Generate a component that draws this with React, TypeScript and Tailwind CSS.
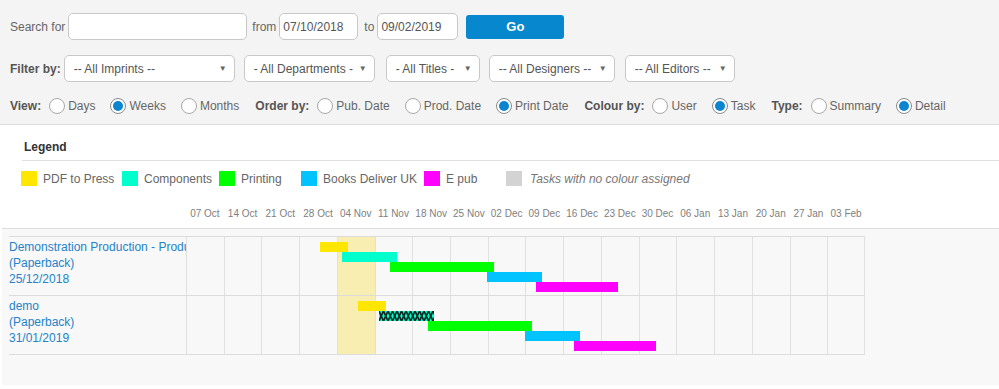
import React from 'react';

type Bar = { left: number; width: number; color: string; hatched?: boolean };

const WEEKS = ['07 Oct', '14 Oct', '21 Oct', '28 Oct', '04 Nov', '11 Nov', '18 Nov', '25 Nov', '02 Dec', '09 Dec', '16 Dec', '23 Dec', '30 Dec', '06 Jan', '13 Jan', '20 Jan', '27 Jan', '03 Feb'];

const LEGEND = [
    { label: 'PDF to Press', color: 'bg-[#ffe600]', w: 'w-[101px]' },
    { label: 'Components', color: 'bg-[#00ffcc]', w: 'w-[97px]' },
    { label: 'Printing', color: 'bg-[#00ff00]', w: 'w-[82px]' },
    { label: 'Books Deliver UK', color: 'bg-[#00c3ff]', w: 'w-[123px]' },
    { label: 'E pub', color: 'bg-[#ff00ff]', w: 'w-[82px]' },
];

const ROWS: { title: string; format: string; date: string; bars: Bar[] }[] = [
    {
        title: 'Demonstration Production - Production',
        format: '(Paperback)',
        date: '25/12/2018',
        bars: [
            { left: 134, width: 28, color: 'bg-[#ffe600]' },
            { left: 156, width: 55, color: 'bg-[#00ffcc]' },
            { left: 204, width: 104, color: 'bg-[#00ff00]' },
            { left: 301, width: 55, color: 'bg-[#00c3ff]' },
            { left: 350, width: 82, color: 'bg-[#ff00ff]' },
        ],
    },
    {
        title: 'demo',
        format: '(Paperback)',
        date: '31/01/2019',
        bars: [
            { left: 172, width: 28, color: 'bg-[#ffe600]' },
            { left: 193, width: 55, color: 'bg-[#00ffcc]', hatched: true },
            { left: 242, width: 104, color: 'bg-[#00ff00]' },
            { left: 339, width: 55, color: 'bg-[#00c3ff]' },
            { left: 388, width: 82, color: 'bg-[#ff00ff]' },
        ],
    },
];

const Radio = ({ checked, label, first }: { checked?: boolean; label: string; first?: boolean }) => (
    <div className={`flex items-center ${first ? 'ml-2' : 'ml-[15px]'}`}>
        <span className={`w-4 h-4 rounded-full bg-white border flex items-center justify-center ${checked ? 'border-[#8a8a8a]' : 'border-[#a8a8a8]'}`}>
            {checked && <span className="w-[10px] h-[10px] rounded-full bg-[#0b85cf]" />}
        </span>
        <span className="ml-[3px] text-[#666]">{label}</span>
    </div>
);

const FakeSelect = ({ label, w, ml }: { label: string; w: string; ml: string }) => (
    <div className={`${w} ${ml} h-[27px] bg-white border border-[#c8c8c8] rounded-[5px] flex items-center justify-between pl-[9px] pr-[7px] text-[#555]`}>
        <span>{label}</span>
        <span className="text-[8px] text-[#666]">▼</span>
    </div>
);

// cross-hatch drawn over a bar: two opposite zigzags that meet in X's
const Hatch = ({ width }: { width: number }) => {
    let a = 'M0 0';
    let b = 'M0 10';
    for (let x = 0; x < width; x += 9) {
        a += ` L${x + 4.5} 10 L${x + 9} 0`;
        b += ` L${x + 4.5} 0 L${x + 9} 10`;
    }
    return (
        <svg width={width} height={10} className="block">
            <path d={a} fill="none" stroke="#0b2a24" strokeWidth={1.7} />
            <path d={b} fill="none" stroke="#0b2a24" strokeWidth={1.7} />
        </svg>
    );
};

export default function App() {
    return (
        <div className="w-[999px] h-[389px] bg-white font-['Liberation_Sans',Arial,sans-serif] text-[12px] leading-4 overflow-hidden">
            {/* filters */}
            <div className="h-[125px] bg-[#f4f4f4] border-b border-[#dcdcdc] pl-[10px] pt-[13px]">
                <div className="flex items-center h-[27px] text-[#666]">
                    <span>Search for</span>
                    <div className="ml-[3px] w-[179px] h-[27px] bg-white border border-[#c8c8c8] rounded-[5px]" />
                    <span className="ml-[5px]">from</span>
                    <div className="ml-[3px] w-[79px] h-[27px] bg-white border border-[#c8c8c8] rounded-[5px] flex items-center pl-[3px] text-[#555]">07/10/2018</div>
                    <span className="ml-[6px]">to</span>
                    <div className="ml-[3px] w-[81px] h-[27px] bg-white border border-[#c8c8c8] rounded-[5px] flex items-center pl-[3px] text-[#555]">09/02/2019</div>
                    <button className="ml-2 w-[98px] h-6 bg-[#0787cd] rounded-[3px] text-white font-bold text-[13px]">Go</button>
                </div>
                <div className="flex items-center h-[27px] mt-[15px]">
                    <span className="font-bold text-[#555]">Filter by:</span>
                    <FakeSelect label="-- All Imprints --" w="w-[171px]" ml="ml-[3px]" />
                    <FakeSelect label="- All Departments -" w="w-[131px]" ml="ml-[9px]" />
                    <FakeSelect label="- All Titles -" w="w-[94px]" ml="ml-[11px]" />
                    <FakeSelect label="-- All Designers --" w="w-[126px]" ml="ml-[9px]" />
                    <FakeSelect label="-- All Editors --" w="w-[110px]" ml="ml-[10px]" />
                </div>
                <div className="flex items-center h-4 mt-4">
                    <span className="font-bold text-[#555]">View:</span>
                    <Radio first label="Days" />
                    <Radio checked label="Weeks" />
                    <Radio label="Months" />
                    <span className="ml-4 font-bold text-[#555]">Order by:</span>
                    <Radio first label="Pub. Date" />
                    <Radio label="Prod. Date" />
                    <Radio checked label="Print Date" />
                    <span className="ml-4 font-bold text-[#555]">Colour by:</span>
                    <Radio first label="User" />
                    <Radio checked label="Task" />
                    <span className="ml-4 font-bold text-[#555]">Type:</span>
                    <Radio first label="Summary" />
                    <Radio checked label="Detail" />
                </div>
            </div>

            {/* legend */}
            <div className="ml-[22px] border-b border-[#e2e2e2] pt-[14px] pb-[5px] pl-[2px]">
                <span className="font-bold text-[#333]">Legend</span>
            </div>
            <div className="flex items-center ml-[21px] mt-[10px] h-[15px]">
                {LEGEND.map(item => (
                    <div key={item.label} className={`${item.w} flex items-center`}>
                        <span className={`w-4 h-[15px] ${item.color}`} />
                        <span className="ml-[6px] text-[#666]">{item.label}</span>
                    </div>
                ))}
                <div className="flex items-center">
                    <span className="w-4 h-[15px] bg-[#d3d3d3]" />
                    <span className="ml-2 italic text-[#777]">Tasks with no colour assigned</span>
                </div>
            </div>

            {/* week header */}
            <div className="ml-[9px] w-[856px] mt-[20px] grid grid-cols-[177px_repeat(18,minmax(0,1fr))] h-[14px] items-center">
                <span />
                {WEEKS.map(w => (
                    <span key={w} className="text-center text-[10px] text-[#808080] whitespace-nowrap">{w}</span>
                ))}
            </div>

            {/* chart */}
            <div className="ml-[2px] mt-[8px] h-[157px] bg-[#f8f8f8] border-t border-[#dcdcdc] pt-[7px] pl-[7px]">
                <div className="w-[856px] border-t border-[#dcdcdc]">
                    {ROWS.map(row => (
                        <div key={row.date} className="relative grid grid-cols-[177px_repeat(18,minmax(0,1fr))] h-[59px] border-b border-[#dcdcdc]">
                            <div className="overflow-hidden whitespace-nowrap text-[#2383c8] pt-[2px]">
                                <div>{row.title}</div>
                                <div>{row.format}</div>
                                <div>{row.date}</div>
                            </div>
                            {WEEKS.map((w, i) => (
                                <div key={w} className={`border-l border-[#e0e0e0] ${i === 17 ? 'border-r' : ''} ${i === 4 ? 'bg-[#f9eeb2]' : ''}`} />
                            ))}
                            <div className="absolute left-[177px] top-[5px] right-0 bottom-0">
                                {row.bars.map((bar, i) => (
                                    <div
                                        key={bar.left}
                                        className={`absolute h-[10px] ${bar.color}`}
                                        style={{ left: bar.left, width: bar.width, top: i * 10 }}
                                    >
                                        {bar.hatched && <Hatch width={bar.width} />}
                                    </div>
                                ))}
                            </div>
                        </div>
                    ))}
                </div>
            </div>
        </div>
    );
}
